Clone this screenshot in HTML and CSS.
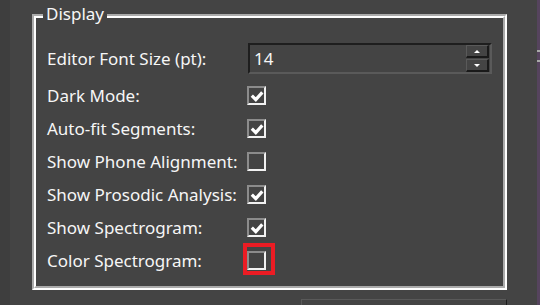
FILE: index.html
```html
<!DOCTYPE html>
<html>
<head>
    <title>Preferences</title>
    <link rel="stylesheet" href="styles.css">
</head>
<body>
    <div class="edge-left"></div>
    <div class="main">
        <div class="group">
            <span class="group-title">Display</span>
            <div class="row row-spin">
                <label>Editor Font Size (pt):</label>
                <div class="spin">
                    <span class="spin-value">14</span>
                    <div class="spin-buttons">
                        <div class="spin-btn"><i class="arrow-up"></i></div>
                        <div class="spin-btn"><i class="arrow-down"></i></div>
                    </div>
                </div>
            </div>
            <div class="row">
                <label>Dark Mode:</label>
                <span class="check"><svg viewBox="0 0 15 15" width="15" height="15"><polyline points="2.8,7.6 6.8,11.6 13.3,4.4"/></svg></span>
            </div>
            <div class="row">
                <label>Auto-fit Segments:</label>
                <span class="check"><svg viewBox="0 0 15 15" width="15" height="15"><polyline points="2.8,7.6 6.8,11.6 13.3,4.4"/></svg></span>
            </div>
            <div class="row">
                <label>Show Phone Alignment:</label>
                <span class="check"></span>
            </div>
            <div class="row">
                <label>Show Prosodic Analysis:</label>
                <span class="check"><svg viewBox="0 0 15 15" width="15" height="15"><polyline points="2.8,7.6 6.8,11.6 13.3,4.4"/></svg></span>
            </div>
            <div class="row">
                <label>Show Spectrogram:</label>
                <span class="check"><svg viewBox="0 0 15 15" width="15" height="15"><polyline points="2.8,7.6 6.8,11.6 13.3,4.4"/></svg></span>
            </div>
            <div class="row">
                <label>Color Spectrogram:</label>
                <span class="check-wrap">
                    <span class="check"></span>
                    <span class="highlight"></span>
                </span>
            </div>
        </div>
        <div class="footer">
            <div class="footer-btn"></div>
        </div>
    </div>
    <div class="edge-right">
        <span class="mark"></span>
        <span class="mark"></span>
    </div>
</body>
</html>
```
FILE: styles.css
```css
body {
    margin: 0;
    height: 305px;
    overflow: hidden;
    display: flex;
    background: #444444;
    font-family: "Noto Sans", "Open Sans", sans-serif;
    font-size: 17px;
    color: #f6f6f6;
}
.edge-left {
    width: 10px;
    background: #3e3e3e;
}
.main {
    flex: 1;
    padding: 14px 0 0 22px;
}
.edge-right {
    width: 3px;
    background: #56445e;
    display: flex;
    flex-direction: column;
    padding-top: 50px;
    gap: 8px;
}
.mark {
    height: 2px;
    background: #a9a9a9;
}
.group {
    position: relative;
    width: 475px;
    height: 276px;
    box-sizing: border-box;
    padding: 25px 0 0 11px;
    border: 4px groove #ffffff;
}
.group-title {
    position: absolute;
    left: 7px;
    top: -16px;
    padding: 0 3px;
    line-height: 23px;
    background: #444444;
}
.row {
    display: flex;
    align-items: center;
    height: 33px;
}
.row-spin {
    height: 31px;
    margin-bottom: 5px;
}
.row label {
    width: 200px;
}
.spin {
    width: 244px;
    height: 31px;
    margin-left: 1px;
    box-sizing: border-box;
    display: flex;
    align-items: center;
    padding: 0 1px 0 4px;
    border: 2px solid #5a5a5a;
    border-top-color: #1e1e1e;
    border-left-color: #1e1e1e;
}
.spin-value {
    flex: 1;
}
.spin-buttons {
    width: 23px;
    height: 27px;
    display: flex;
    flex-direction: column;
    gap: 1px;
}
.spin-btn {
    flex: 1;
    box-sizing: border-box;
    display: flex;
    align-items: center;
    justify-content: center;
    border: 1px solid #5a5a5a;
    border-right: 2px solid #1a1a1a;
    border-bottom: 2px solid #1a1a1a;
}
.arrow-up {
    border-left: 3px solid transparent;
    border-right: 3px solid transparent;
    border-bottom: 3px solid #ffffff;
}
.arrow-down {
    border-left: 3px solid transparent;
    border-right: 3px solid transparent;
    border-top: 3px solid #ffffff;
}
.check {
    width: 19px;
    height: 19px;
    box-sizing: border-box;
    display: flex;
    border: 2px solid #f2f2f2;
    border-top-color: #8c8c8c;
    border-left-color: #8c8c8c;
}
.check svg {
    fill: none;
    stroke: #ffffff;
    stroke-width: 3.2;
}
.check-wrap {
    position: relative;
    display: flex;
}
.highlight {
    position: absolute;
    left: -4px;
    top: -8px;
    width: 32px;
    height: 32px;
    box-sizing: border-box;
    border: 4px solid #ec1c24;
}
.footer {
    width: 475px;
    display: flex;
    justify-content: flex-end;
    padding-top: 9px;
}
.footer-btn {
    width: 206px;
    height: 20px;
    box-sizing: border-box;
    border: 1px solid #595959;
    border-right-color: #1b1b1b;
}
```
